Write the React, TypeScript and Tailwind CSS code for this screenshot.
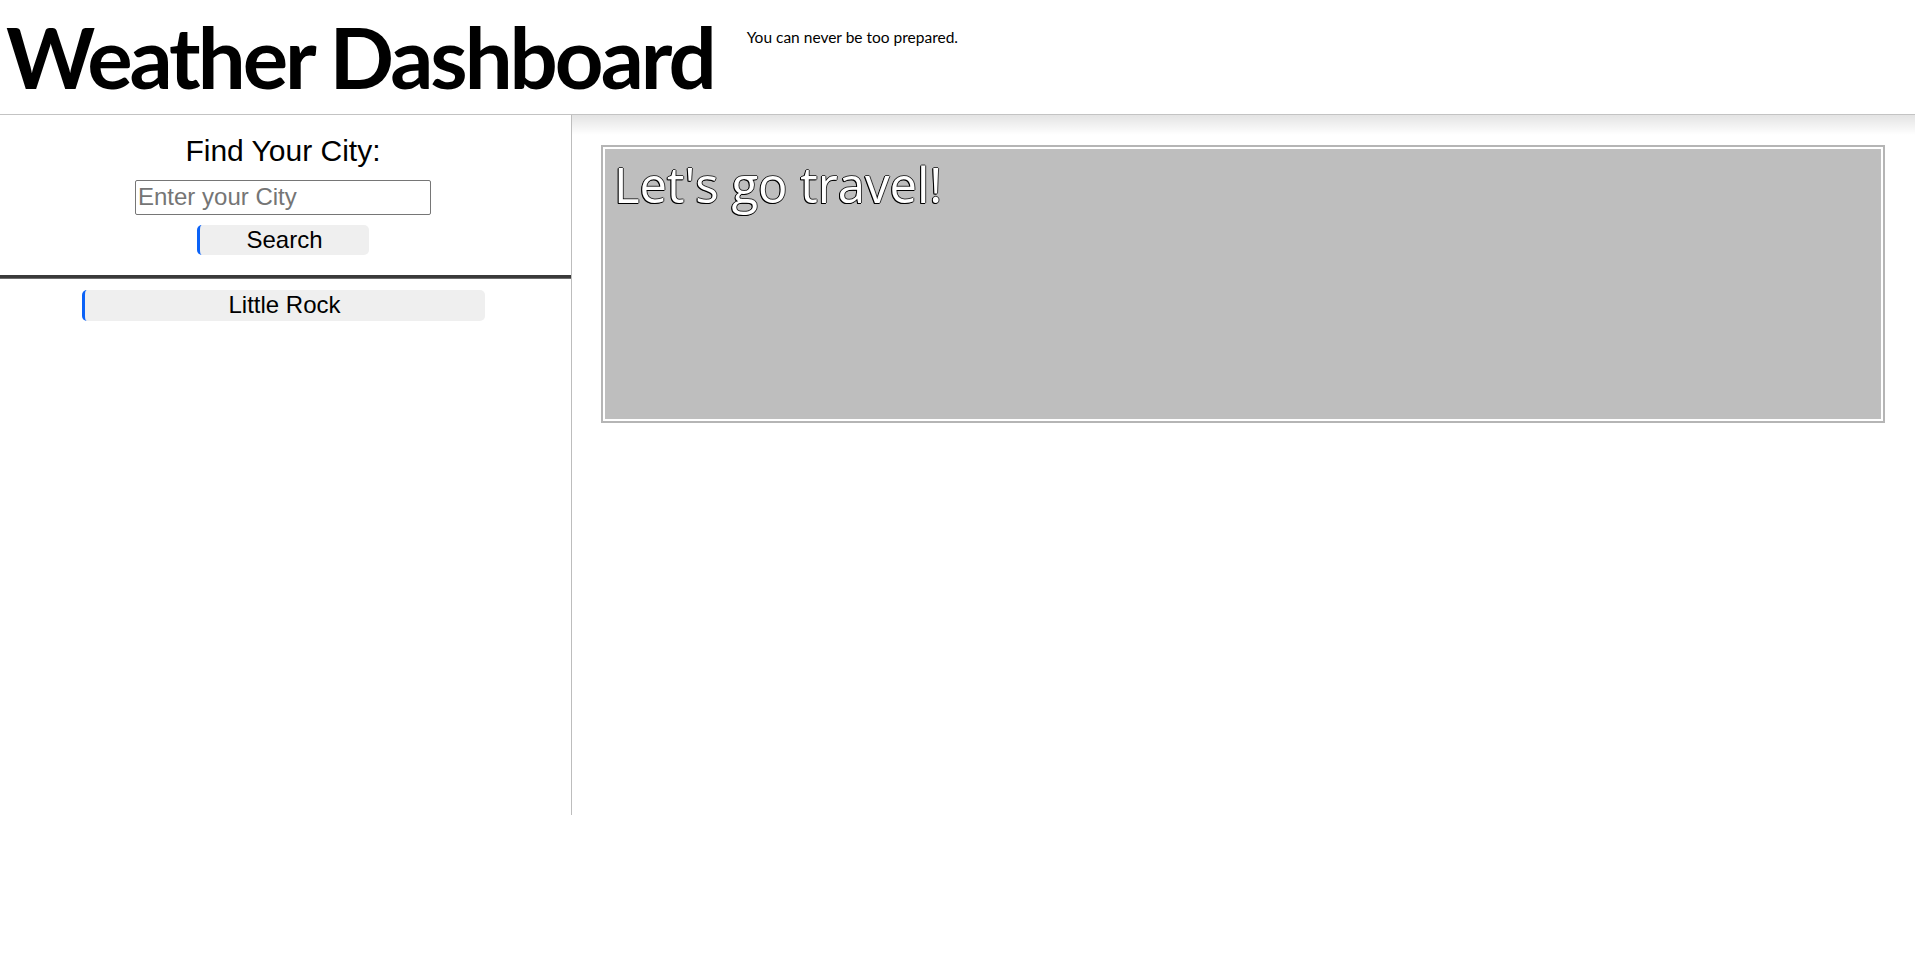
import React from 'react';

const savedCities = ['Little Rock'];

const cityBtn =
  'bg-[#efefef] border-l-[3px] border-[#0b62f7] rounded-[5px] text-[24px] leading-[1.117] py-[2px] text-black';

export default function App() {
  return (
    <div className="min-h-screen bg-white font-['Liberation_Sans',Arial,sans-serif] text-black">
      <header className="h-[115px] flex items-start border-b border-[#c3c3c3]">
        <h1 className="ml-[6px] mt-[14px] font-['Lato',sans-serif] font-bold text-[85px] leading-none tracking-[-3px]">
          Weather Dashboard
        </h1>
        <p className="ml-[33px] mt-[30px] font-['Lato',sans-serif] text-[15.5px] leading-none">
          You can never be too prepared.
        </p>
      </header>

      <div className="flex">
        <aside className="w-[572px] h-[700px] shrink-0 border-r border-[#bdbdbd]">
          <div className="flex flex-col items-center pt-[19px] pr-[5px]">
            <h2 className="text-[30px] leading-[1.117]">Find Your City:</h2>
            <input
              type="text"
              placeholder="Enter your City"
              className="mt-[12px] w-[296px] h-[35px] px-[2px] border border-[#767676] rounded-[2px] text-[24px] placeholder:text-[#757575] outline-none"
            />
            <button className={`${cityBtn} mt-[10px] w-[172px]`}>Search</button>
          </div>

          <div className="mt-[20px] border-t-[3px] border-b border-t-[#3a3a3a] border-b-[#6e6e6e]" />

          <ul className="flex flex-col items-center pt-[11px] pr-[5px]">
            {savedCities.map((city) => (
              <li key={city}>
                <button className={`${cityBtn} w-[403px]`}>{city}</button>
              </li>
            ))}
          </ul>
        </aside>

        <main className="flex-1 pt-[30px] pl-[29px] pr-[30px] bg-[linear-gradient(to_bottom,rgba(0,0,0,0.11),rgba(0,0,0,0)_20px)]">
          <section className="h-[278px] border-2 border-[#b5b5b5]">
            <div className="h-full border-2 border-white bg-[#bebebe] pt-[11px] pl-[9px]">
              <h2 className="font-['Open_Sans',sans-serif] text-[49px] leading-none text-white [text-shadow:-1px_0_0_#000,0_1px_0_#000,-1px_1px_0_#000,1px_0_0_rgba(0,0,0,0.7),0_-1px_0_rgba(0,0,0,0.7)]">
                Let's go travel!
              </h2>
            </div>
          </section>
        </main>
      </div>
    </div>
  );
}
